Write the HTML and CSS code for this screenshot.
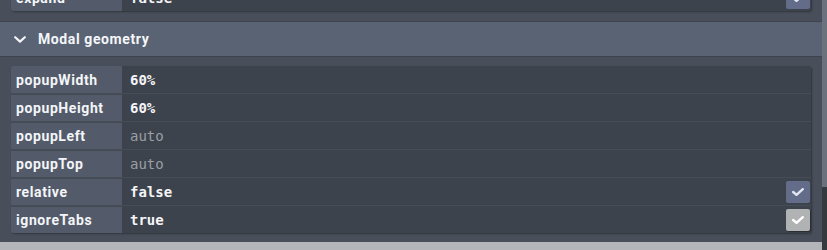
FILE: index.html
```html
<!DOCTYPE html>
<html lang="en">
<head>
  <meta charset="UTF-8">
  <title>Modal geometry</title>
  <link rel="stylesheet" href="styles.css">
</head>
<body>
  <div class="app">
    <div class="content">

      <div class="props props-prev">
        <div class="row">
          <div class="key">expand</div>
          <div class="value">false
            <span class="check on"><svg viewBox="0 0 12 8" width="12" height="8"><path d="M1.2 4 L4.5 6.8 L10.8 1.2"/></svg></span>
          </div>
        </div>
      </div>

      <div class="section-head">
        <svg class="chevron" viewBox="0 0 12 7" width="12" height="7"><path d="M1.2 1.2 L6 5.6 L10.8 1.2"/></svg>
        <span class="section-title">Modal geometry</span>
      </div>

      <div class="props">
        <div class="row">
          <div class="key">popupWidth</div>
          <div class="value">60%</div>
        </div>
        <div class="row">
          <div class="key">popupHeight</div>
          <div class="value">60%</div>
        </div>
        <div class="row">
          <div class="key">popupLeft</div>
          <div class="value muted">auto</div>
        </div>
        <div class="row">
          <div class="key">popupTop</div>
          <div class="value muted">auto</div>
        </div>
        <div class="row">
          <div class="key">relative</div>
          <div class="value">false
            <span class="check on"><svg viewBox="0 0 12 8" width="12" height="8"><path d="M1.2 4 L4.5 6.8 L10.8 1.2"/></svg></span>
          </div>
        </div>
        <div class="row">
          <div class="key">ignoreTabs</div>
          <div class="value">true
            <span class="check off"><svg viewBox="0 0 12 8" width="12" height="8"><path d="M1.2 4 L4.5 6.8 L10.8 1.2"/></svg></span>
          </div>
        </div>
      </div>

      <div class="footer-strip"></div>
    </div>

    <div class="scrollbar">
      <div class="thumb"></div>
    </div>
  </div>
</body>
</html>
```

FILE: styles.css
```css
html, body {
  margin: 0;
  padding: 0;
}

body {
  width: 827px;
  height: 250px;
  overflow: hidden;
  background-color: #494f5a;
  font-family: Roboto, "Liberation Sans", sans-serif;
  color: #f2f4f7;
}

.app {
  display: flex;
  height: 250px;
}

.content {
  width: 822px;
  overflow: hidden;
}

/* property tables */
.props {
  margin: 9px 11px 0 11px;
  border-radius: 3px;
  overflow: hidden;
  box-shadow: 1px 1px 2px rgba(0, 0, 0, 0.35);
}

.props-prev {
  margin-top: -16px;
}

.row {
  display: grid;
  grid-template-columns: 111px 1fr;
  height: 27px;
}

.row + .row {
  border-top: 1px solid #474d57;
}

.key {
  display: flex;
  align-items: center;
  padding-left: 5px;
  background-color: #535b6b;
  font-size: 14px;
  font-weight: bold;
  letter-spacing: 0.6px;
  color: #f3f5f8;
}

.row + .row .key {
  box-shadow: inset 0 1px 0 #434955;
}

.value {
  display: flex;
  align-items: center;
  justify-content: space-between;
  padding-left: 8px;
  background-color: #3d434c;
  font-family: "DejaVu Sans Mono", "Liberation Mono", monospace;
  font-size: 14px;
  font-weight: bold;
  color: #f5f5f7;
}

.value.muted {
  font-weight: normal;
  color: #9a9ea5;
}

.check {
  display: flex;
  align-items: center;
  justify-content: center;
  width: 24px;
  height: 22px;
  margin-right: 1px;
  border-radius: 2px;
}

.check svg {
  fill: none;
  stroke-width: 2.4;
  stroke-linecap: round;
  stroke-linejoin: round;
}

.check.on {
  background-color: #636c89;
}

.check.on svg {
  stroke: #e2e6f2;
}

.check.off {
  background-color: #b1b2b4;
  box-shadow: 1px 1px 1px rgba(0, 0, 0, 0.35);
}

.check.off svg {
  stroke: #ffffff;
}

/* section header */
.section-head {
  display: flex;
  align-items: center;
  height: 34px;
  margin-top: 10px;
  padding-left: 14px;
  background-color: #5a6374;
  border-top: 1px solid #3e434c;
  border-bottom: 1px solid #3e434c;
}

.chevron {
  fill: none;
  stroke: #f2f4f7;
  stroke-width: 2.2;
  stroke-linecap: round;
  stroke-linejoin: round;
  margin-right: 12px;
}

.section-title {
  font-size: 14px;
  font-weight: bold;
  letter-spacing: 0.6px;
  color: #f4f6f9;
}

.footer-strip {
  height: 10px;
  margin-top: 9px;
  background-color: #b3b5ba;
}

/* scrollbar */
.scrollbar {
  width: 5px;
  background-color: #353a41;
}

.thumb {
  height: 187px;
  background-color: #6b717d;
}
```
